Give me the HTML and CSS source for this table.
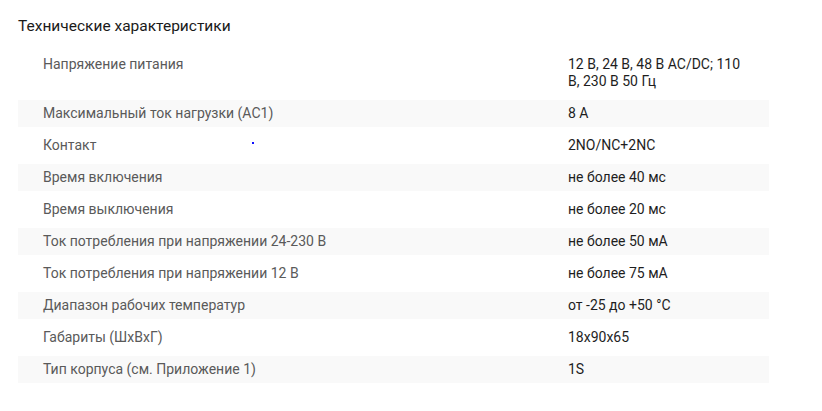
FILE: index.html
```html
<!DOCTYPE html>
<html lang="ru">
<head>
    <meta charset="UTF-8">
    <meta name="viewport" content="width=device-width, initial-scale=1.0">
    <title>Технические характеристики</title>
    <link rel="stylesheet" href="styles.css">
</head>
<body>
    <section class="specs">
        <h2 class="specs-title">Технические характеристики</h2>
        <span class="stray-dot"></span>
        <table class="specs-table">
            <tr>
                <td class="name">Напряжение питания</td>
                <td class="value">12 В, 24 В, 48 В AC/DC; 110 В, 230 В 50 Гц</td>
            </tr>
            <tr>
                <td class="name">Максимальный ток нагрузки (AC1)</td>
                <td class="value">8 А</td>
            </tr>
            <tr>
                <td class="name">Контакт</td>
                <td class="value">2NO/NC+2NC</td>
            </tr>
            <tr>
                <td class="name">Время включения</td>
                <td class="value">не более 40 мс</td>
            </tr>
            <tr>
                <td class="name">Время выключения</td>
                <td class="value">не более 20 мс</td>
            </tr>
            <tr>
                <td class="name">Ток потребления при напряжении 24-230 В</td>
                <td class="value">не более 50 мА</td>
            </tr>
            <tr>
                <td class="name">Ток потребления при напряжении 12 В</td>
                <td class="value">не более 75 мА</td>
            </tr>
            <tr>
                <td class="name">Диапазон рабочих температур</td>
                <td class="value">от -25 до +50 °С</td>
            </tr>
            <tr>
                <td class="name">Габариты (ШхВхГ)</td>
                <td class="value">18x90x65</td>
            </tr>
            <tr>
                <td class="name">Тип корпуса (см. Приложение 1)</td>
                <td class="value">1S</td>
            </tr>
        </table>
    </section>
</body>
</html>
```

FILE: styles.css
```css
body {
    margin: 0;
    background: #fff;
    font-family: Roboto, Arial, sans-serif;
    color: #222;
}
.specs {
    position: relative;
    padding: 16px 18px;
    width: 751px;
}
.specs-title {
    margin: 0 0 10px;
    font-size: 15.5px;
    font-weight: 400;
    line-height: 20px;
    color: #1a1a1a;
}
.stray-dot {
    position: absolute;
    left: 252px;
    top: 142px;
    width: 2px;
    height: 2px;
    background: #1010ff;
}
.specs-table {
    width: 100%;
    border-collapse: separate;
    border-spacing: 0 5px;
    font-size: 14px;
    line-height: 17px;
}
.specs-table td {
    padding: 5px 25px;
    vertical-align: top;
}
.specs-table tr:nth-child(even) td {
    background: #f9f9f9;
}
.name {
    width: 475px;
    color: #5a5a5a;
}
.value {
    color: #1e1e1e;
}
```
